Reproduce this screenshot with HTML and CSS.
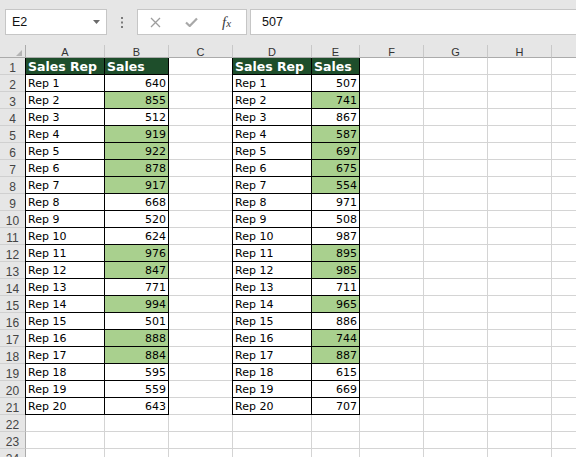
FILE: index.html
```html
<!DOCTYPE html>
<html>
<head>
<meta charset="utf-8">
<link rel="stylesheet" href="styles.css">
</head>
<body>
<div class="app">
  <div class="toolbar">
    <div class="namebox"><span>E2</span><svg class="dd" width="7" height="4" viewBox="0 0 7 4"><path d="M0 0H7L3.5 4Z" fill="#6a6a6a"/></svg></div>
    <div class="grip"><svg width="2" height="11" viewBox="0 0 2 11"><rect x="0" y="0" width="2" height="2" fill="#7a7a7a"/><rect x="0" y="4.5" width="2" height="2" fill="#7a7a7a"/><rect x="0" y="9" width="2" height="2" fill="#7a7a7a"/></svg></div>
    <div class="fxbox">
      <svg class="ic-x" width="11" height="11" viewBox="0 0 11 11"><path d="M1 1L10 10M10 1L1 10" stroke="#9d9d9d" stroke-width="1.3" fill="none"/></svg>
      <svg class="ic-ok" width="13" height="10" viewBox="0 0 13 10"><path d="M1 5.5L4.7 9L12 1.5" stroke="#a8a8a8" stroke-width="2.2" fill="none"/></svg>
      <span class="fx"><i>f</i><i class="fxx">x</i></span>
    </div>
    <div class="input">507</div>
  </div>
  <div class="sheet">
    <div class="row colhead"><div class="corner"><svg width="6" height="6" viewBox="0 0 6 6"><path d="M6 0V6H0Z" fill="#b4b4b4"/></svg></div><div class="ch">A</div><div class="ch">B</div><div class="ch">C</div><div class="ch">D</div><div class="ch">E</div><div class="ch">F</div><div class="ch">G</div><div class="ch">H</div><div class="ch"></div></div>
    <div class="row"><div class="rh">1</div><div class="c t tl h">Sales Rep</div><div class="c t h">Sales</div><div class="c"></div><div class="c t tl h">Sales Rep</div><div class="c t h">Sales</div><div class="c"></div><div class="c"></div><div class="c"></div><div class="c"></div></div>
    <div class="row"><div class="rh">2</div><div class="c t tl">Rep 1</div><div class="c t n">640</div><div class="c"></div><div class="c t tl">Rep 1</div><div class="c t n">507</div><div class="c"></div><div class="c"></div><div class="c"></div><div class="c"></div></div>
    <div class="row"><div class="rh">3</div><div class="c t tl">Rep 2</div><div class="c t n g">855</div><div class="c"></div><div class="c t tl">Rep 2</div><div class="c t n g">741</div><div class="c"></div><div class="c"></div><div class="c"></div><div class="c"></div></div>
    <div class="row"><div class="rh">4</div><div class="c t tl">Rep 3</div><div class="c t n">512</div><div class="c"></div><div class="c t tl">Rep 3</div><div class="c t n">867</div><div class="c"></div><div class="c"></div><div class="c"></div><div class="c"></div></div>
    <div class="row"><div class="rh">5</div><div class="c t tl">Rep 4</div><div class="c t n g">919</div><div class="c"></div><div class="c t tl">Rep 4</div><div class="c t n g">587</div><div class="c"></div><div class="c"></div><div class="c"></div><div class="c"></div></div>
    <div class="row"><div class="rh">6</div><div class="c t tl">Rep 5</div><div class="c t n g">922</div><div class="c"></div><div class="c t tl">Rep 5</div><div class="c t n g">697</div><div class="c"></div><div class="c"></div><div class="c"></div><div class="c"></div></div>
    <div class="row"><div class="rh">7</div><div class="c t tl">Rep 6</div><div class="c t n g">878</div><div class="c"></div><div class="c t tl">Rep 6</div><div class="c t n g">675</div><div class="c"></div><div class="c"></div><div class="c"></div><div class="c"></div></div>
    <div class="row"><div class="rh">8</div><div class="c t tl">Rep 7</div><div class="c t n g">917</div><div class="c"></div><div class="c t tl">Rep 7</div><div class="c t n g">554</div><div class="c"></div><div class="c"></div><div class="c"></div><div class="c"></div></div>
    <div class="row"><div class="rh">9</div><div class="c t tl">Rep 8</div><div class="c t n">668</div><div class="c"></div><div class="c t tl">Rep 8</div><div class="c t n">971</div><div class="c"></div><div class="c"></div><div class="c"></div><div class="c"></div></div>
    <div class="row"><div class="rh">10</div><div class="c t tl">Rep 9</div><div class="c t n">520</div><div class="c"></div><div class="c t tl">Rep 9</div><div class="c t n">508</div><div class="c"></div><div class="c"></div><div class="c"></div><div class="c"></div></div>
    <div class="row"><div class="rh">11</div><div class="c t tl">Rep 10</div><div class="c t n">624</div><div class="c"></div><div class="c t tl">Rep 10</div><div class="c t n">987</div><div class="c"></div><div class="c"></div><div class="c"></div><div class="c"></div></div>
    <div class="row"><div class="rh">12</div><div class="c t tl">Rep 11</div><div class="c t n g">976</div><div class="c"></div><div class="c t tl">Rep 11</div><div class="c t n g">895</div><div class="c"></div><div class="c"></div><div class="c"></div><div class="c"></div></div>
    <div class="row"><div class="rh">13</div><div class="c t tl">Rep 12</div><div class="c t n g">847</div><div class="c"></div><div class="c t tl">Rep 12</div><div class="c t n g">985</div><div class="c"></div><div class="c"></div><div class="c"></div><div class="c"></div></div>
    <div class="row"><div class="rh">14</div><div class="c t tl">Rep 13</div><div class="c t n">771</div><div class="c"></div><div class="c t tl">Rep 13</div><div class="c t n">711</div><div class="c"></div><div class="c"></div><div class="c"></div><div class="c"></div></div>
    <div class="row"><div class="rh">15</div><div class="c t tl">Rep 14</div><div class="c t n g">994</div><div class="c"></div><div class="c t tl">Rep 14</div><div class="c t n g">965</div><div class="c"></div><div class="c"></div><div class="c"></div><div class="c"></div></div>
    <div class="row"><div class="rh">16</div><div class="c t tl">Rep 15</div><div class="c t n">501</div><div class="c"></div><div class="c t tl">Rep 15</div><div class="c t n">886</div><div class="c"></div><div class="c"></div><div class="c"></div><div class="c"></div></div>
    <div class="row"><div class="rh">17</div><div class="c t tl">Rep 16</div><div class="c t n g">888</div><div class="c"></div><div class="c t tl">Rep 16</div><div class="c t n g">744</div><div class="c"></div><div class="c"></div><div class="c"></div><div class="c"></div></div>
    <div class="row"><div class="rh">18</div><div class="c t tl">Rep 17</div><div class="c t n g">884</div><div class="c"></div><div class="c t tl">Rep 17</div><div class="c t n g">887</div><div class="c"></div><div class="c"></div><div class="c"></div><div class="c"></div></div>
    <div class="row"><div class="rh">19</div><div class="c t tl">Rep 18</div><div class="c t n">595</div><div class="c"></div><div class="c t tl">Rep 18</div><div class="c t n">615</div><div class="c"></div><div class="c"></div><div class="c"></div><div class="c"></div></div>
    <div class="row"><div class="rh">20</div><div class="c t tl">Rep 19</div><div class="c t n">559</div><div class="c"></div><div class="c t tl">Rep 19</div><div class="c t n">669</div><div class="c"></div><div class="c"></div><div class="c"></div><div class="c"></div></div>
    <div class="row"><div class="rh">21</div><div class="c t tl">Rep 20</div><div class="c t n">643</div><div class="c"></div><div class="c t tl">Rep 20</div><div class="c t n">707</div><div class="c"></div><div class="c"></div><div class="c"></div><div class="c"></div></div>
    <div class="row"><div class="rh">22</div><div class="c"></div><div class="c"></div><div class="c"></div><div class="c"></div><div class="c"></div><div class="c"></div><div class="c"></div><div class="c"></div><div class="c"></div></div>
    <div class="row"><div class="rh">23</div><div class="c"></div><div class="c"></div><div class="c"></div><div class="c"></div><div class="c"></div><div class="c"></div><div class="c"></div><div class="c"></div><div class="c"></div></div>
    <div class="row"><div class="rh">24</div><div class="c"></div><div class="c"></div><div class="c"></div><div class="c"></div><div class="c"></div><div class="c"></div><div class="c"></div><div class="c"></div><div class="c"></div></div>
  </div>
</div>
</body>
</html>
```
FILE: styles.css
```css
html, body {
  margin: 0;
  padding: 0;
  background: #e6e6e6;
}
.app {
  width: 576px;
  height: 457px;
  overflow: hidden;
  background: #e6e6e6;
  font-family: "Liberation Sans", Arial, sans-serif;
}
.toolbar {
  height: 45px;
  box-sizing: border-box;
  padding: 9px 0 0 5px;
  display: flex;
  align-items: flex-start;
}
.namebox {
  width: 102px;
  height: 26px;
  box-sizing: border-box;
  border: 1px solid #c6c6c6;
  background: #fff;
  display: flex;
  align-items: center;
  justify-content: space-between;
  padding: 0 6px 0 6px;
  font-size: 12.5px;
  color: #111;
}
.grip {
  width: 30px;
  height: 26px;
  display: flex;
  align-items: center;
  justify-content: center;
}
.fxbox {
  width: 110px;
  height: 26px;
  box-sizing: border-box;
  border: 1px solid #c6c6c6;
  background: #fff;
  display: flex;
  align-items: center;
  padding-left: 12px;
}
.ic-x { margin-right: 24px; }
.ic-ok { margin-right: 24px; }
.fx {
  font-family: "Liberation Serif", "Times New Roman", serif;
  color: #3c3c3c;
  font-size: 15px;
  line-height: 1;
}
.fxx { font-size: 11px; }
.input {
  flex: 1;
  margin-left: 3px;
  margin-right: -4px;
  height: 26px;
  box-sizing: border-box;
  border: 1px solid #c6c6c6;
  background: #fff;
  padding-left: 11px;
  line-height: 24px;
  font-size: 12.5px;
  color: #111;
}
.sheet {
  width: 576px;
  overflow: hidden;
}
.row {
  display: grid;
  grid-template-columns: 26px 79px 64px 64px 79px 48px 64px 64px 64px 64px;
  height: 17px;
  width: 616px;
}
.colhead { height: 13px; }
.corner, .ch {
  box-sizing: border-box;
  height: 13px;
  background: #e6e6e6;
  border-bottom: 1px solid #ababab;
  border-right: 1px solid #c8c8c8;
}
.corner {
  display: flex;
  align-items: flex-end;
  justify-content: flex-end;
  padding: 0 3px 1px 0;
  border-right-color: #ababab;
}
.ch {
  text-align: center;
  font-size: 11px;
  line-height: 14px;
  color: #333;
}
.rh {
  box-sizing: border-box;
  height: 17px;
  background: #e6e6e6;
  border-right: 1px solid #ababab;
  border-bottom: 1px solid #d0d0d0;
  text-align: center;
  font-size: 12px;
  line-height: 18px;
  padding-top: 1px;
  color: #444;
}
.c {
  box-sizing: border-box;
  height: 17px;
  background: #fff;
  border-right: 1px solid #d4d4d4;
  border-bottom: 1px solid #d4d4d4;
  padding: 0 2px;
  font-family: "DejaVu Sans", Verdana, sans-serif;
  font-size: 11px;
  line-height: 18px;
  color: #000;
  white-space: nowrap;
}
.t {
  border-right-color: #000;
  border-bottom-color: #000;
}
.tl { box-shadow: -1px 0 0 #000; }
.n { text-align: right; }
.g { background: #a9d08e; }
.h {
  background: #1e4e2b;
  color: #fff;
  font-weight: bold;
  font-size: 12.5px;
}
```
